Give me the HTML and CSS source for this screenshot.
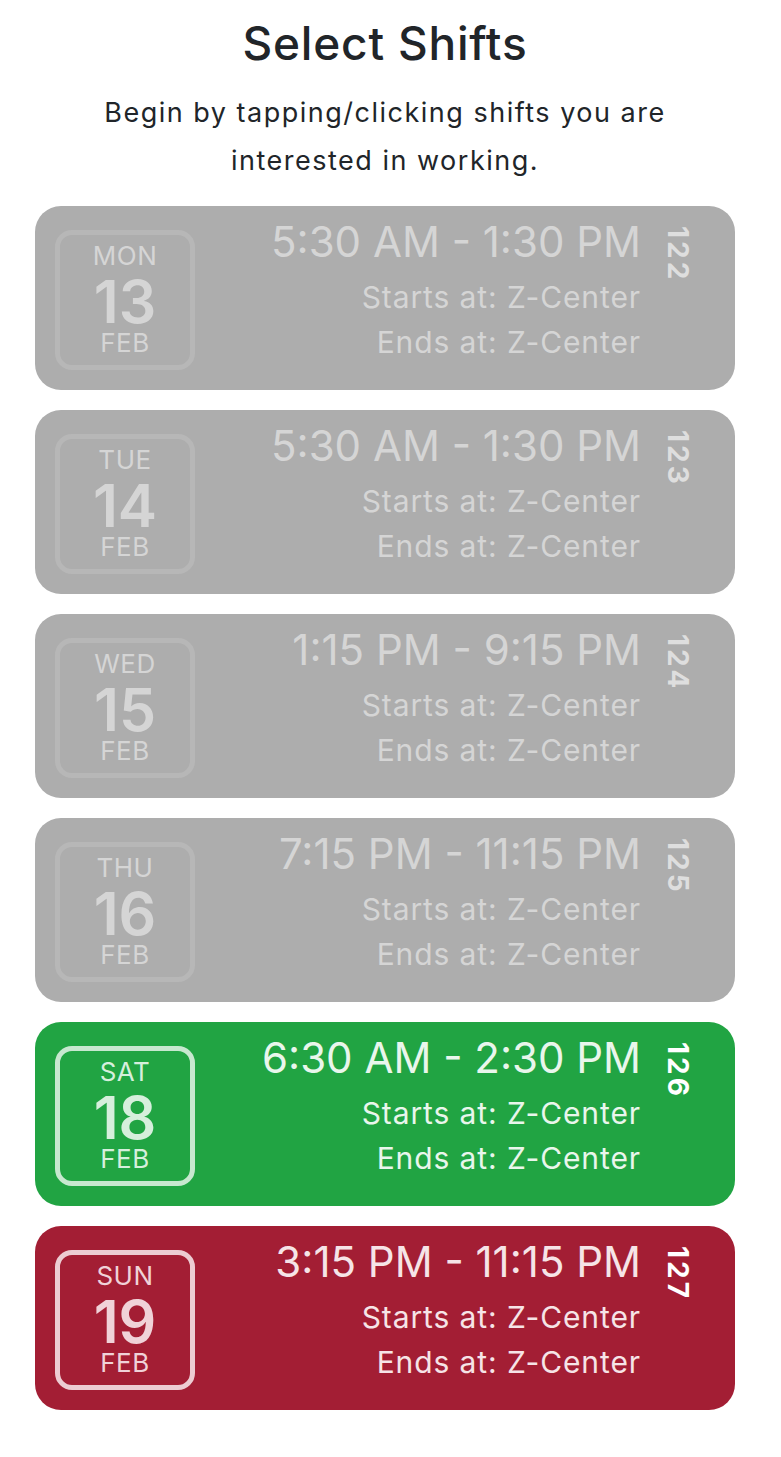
FILE: index.html
```html
<!DOCTYPE html>
<html lang="en">
<head>
<meta charset="utf-8">
<title>Select Shifts</title>
<link rel="stylesheet" href="styles.css">
</head>
<body>
<main class="page">
  <h1 class="title">Select Shifts</h1>
  <p class="lead">Begin by tapping/clicking shifts you are interested in working.</p>

  <div class="shift shift--off">
    <div class="date"><span class="dow">MON</span><span class="day">13</span><span class="mon">FEB</span></div>
    <div class="info"><div class="time">5:30 AM - 1:30 PM</div><div class="loc">Starts at: Z-Center</div><div class="loc">Ends at: Z-Center</div></div>
    <div class="num">122</div>
  </div>

  <div class="shift shift--off">
    <div class="date"><span class="dow">TUE</span><span class="day">14</span><span class="mon">FEB</span></div>
    <div class="info"><div class="time">5:30 AM - 1:30 PM</div><div class="loc">Starts at: Z-Center</div><div class="loc">Ends at: Z-Center</div></div>
    <div class="num">123</div>
  </div>

  <div class="shift shift--off">
    <div class="date"><span class="dow">WED</span><span class="day">15</span><span class="mon">FEB</span></div>
    <div class="info"><div class="time">1:15 PM - 9:15 PM</div><div class="loc">Starts at: Z-Center</div><div class="loc">Ends at: Z-Center</div></div>
    <div class="num">124</div>
  </div>

  <div class="shift shift--off">
    <div class="date"><span class="dow">THU</span><span class="day">16</span><span class="mon">FEB</span></div>
    <div class="info"><div class="time">7:15 PM - 11:15 PM</div><div class="loc">Starts at: Z-Center</div><div class="loc">Ends at: Z-Center</div></div>
    <div class="num">125</div>
  </div>

  <div class="shift shift--yes">
    <div class="date"><span class="dow">SAT</span><span class="day">18</span><span class="mon">FEB</span></div>
    <div class="info"><div class="time">6:30 AM - 2:30 PM</div><div class="loc">Starts at: Z-Center</div><div class="loc">Ends at: Z-Center</div></div>
    <div class="num">126</div>
  </div>

  <div class="shift shift--no">
    <div class="date"><span class="dow">SUN</span><span class="day">19</span><span class="mon">FEB</span></div>
    <div class="info"><div class="time">3:15 PM - 11:15 PM</div><div class="loc">Starts at: Z-Center</div><div class="loc">Ends at: Z-Center</div></div>
    <div class="num">127</div>
  </div>
</main>
</body>
</html>
```

FILE: styles.css
```css
* { box-sizing: border-box; }

body {
  margin: 0;
  background: #ffffff;
  font-family: Inter, "Noto Sans", "Liberation Sans", sans-serif;
  color: #212529;
}

.page {
  padding: 16px 46px 40px 35px;
  display: flex;
  flex-direction: column;
  gap: 20px;
}

.title {
  margin: 0;
  font-size: 46px;
  font-weight: 500;
  line-height: 54px;
  letter-spacing: 0.8px;
  text-align: center;
}

.lead {
  margin: -1px 0 1px;
  font-size: 27px;
  line-height: 48px;
  letter-spacing: 1.5px;
  text-align: center;
  padding: 0 40px;
}

.shift {
  display: flex;
  align-items: flex-start;
  height: 184px;
  padding: 24px 42px 20px 20px;
  border-radius: 26px;
}

.date {
  width: 140px;
  height: 140px;
  flex: none;
  border: 5px solid;
  border-radius: 17px;
  padding-top: 6px;
  display: flex;
  flex-direction: column;
  align-items: center;
}

.dow, .mon {
  font-size: 26px;
  line-height: 30px;
  letter-spacing: 0.5px;
}

.day {
  margin-top: 5px;
  font-size: 59px;
  font-weight: 600;
  line-height: 52px;
}

.info {
  flex: 1;
  margin-top: -13px;
  text-align: right;
}

.time {
  font-size: 42px;
  line-height: 50px;
  margin-bottom: 8px;
  white-space: nowrap;
}

.loc {
  font-size: 30px;
  line-height: 45px;
  letter-spacing: 0.9px;
  white-space: nowrap;
}

.num {
  writing-mode: vertical-rl;
  font-size: 28px;
  font-weight: 700;
  line-height: 30px;
  letter-spacing: 3px;
  margin-left: 22px;
  margin-top: -4px;
}

.shift--off { background: #adadad; color: #d5d5d5; }
.shift--off .date { border-color: #b7b7b7; }
.shift--off .num { color: #dedede; }

.shift--yes { background: #21a443; color: #e9f6ec; }
.shift--yes .date { border-color: #c7e8cf; color: #d6efdc; }
.shift--yes .num { color: #ffffff; }

.shift--no { background: #a31e34; color: #f6e4e7; }
.shift--no .date { border-color: #edccd2; color: #f0d2d8; }
.shift--no .num { color: #ffffff; }
```
